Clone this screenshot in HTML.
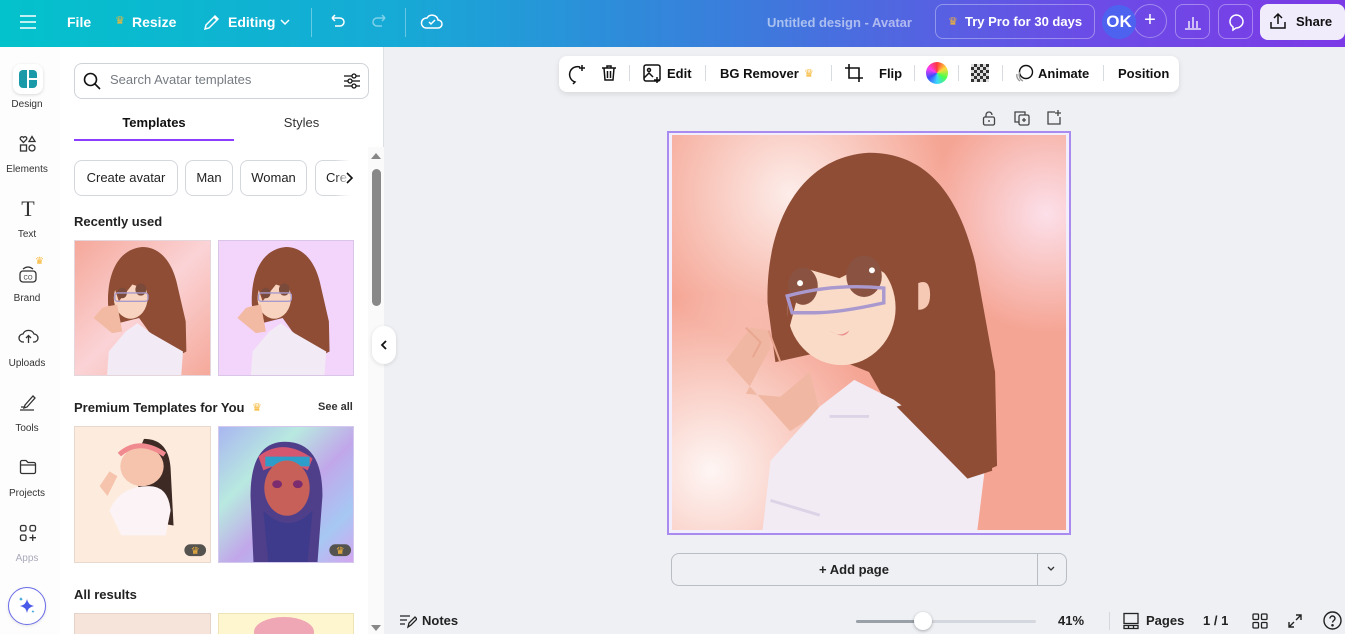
<!DOCTYPE html>
<html style="width:1345px;height:634px;overflow:hidden"><head><meta charset="utf-8">
<style>
*{box-sizing:border-box;margin:0;padding:0}
body{width:1345px;height:634px;overflow:hidden;font-family:"Liberation Sans",sans-serif;background:#eef0f4;position:relative;color:#0d1216}
.a{position:absolute}
.top{left:0;top:0;width:1345px;height:47px;background:linear-gradient(90deg,#03c2cc 0%,#17a9d6 30%,#3b7cdc 55%,#6a4de6 80%,#7c3ae6 100%)}
.tw{color:#fff;font-weight:bold;font-size:14px}
.rail{left:0;top:47px;width:60px;height:587px;background:#fdfdfd}
.ri{width:60px;text-align:center;font-size:10px;color:#333}
.panel{left:60px;top:47px;width:324px;height:587px;background:#fff;border-right:1px solid #dde0e5}
.chip{top:160px;height:36px;border:1px solid #d4d7dc;border-radius:8px;font-size:13px;color:#222;line-height:34px;text-align:center;background:#fff}
.h{font-size:13px;font-weight:bold;color:#222}
.tb{font-size:13px;font-weight:bold;color:#111}
.sep{width:1px;height:16px;background:#d8dbe0;top:65px}
</style></head><body>
<div class="a top"></div>
<svg class="a" style="left:18px;top:13px" width="20" height="18" viewBox="0 0 20 18"><path d="M2 3h16M2 9h16M2 15h16" stroke="#fff" stroke-width="1.6"/></svg>
<div class="a tw" style="left:67px;top:14px">File</div>
<div class="a" style="left:115px;top:14px;color:#f7b733;font-size:11px">♛</div>
<div class="a tw" style="left:132px;top:14px">Resize</div>
<svg class="a" style="left:202px;top:12px" width="20" height="20" viewBox="0 0 20 20"><path d="M3 17l1-4 9-9 3 3-9 9z M12 5l3 3" fill="none" stroke="#fff" stroke-width="1.5"/></svg>
<div class="a tw" style="left:228px;top:14px">Editing</div>
<svg class="a" style="left:279px;top:17px" width="12" height="10" viewBox="0 0 12 10"><path d="M2 3l4 4 4-4" fill="none" stroke="#fff" stroke-width="1.5"/></svg>
<div class="a" style="left:311px;top:8px;width:1px;height:29px;background:rgba(255,255,255,.35)"></div>
<svg class="a" style="left:327px;top:12px" width="20" height="20" viewBox="0 0 20 20"><path d="M5 6h8a4 4 0 010 8H8M5 6l3-3M5 6l3 3" fill="none" stroke="#fff" stroke-width="1.5"/></svg>
<svg class="a" style="left:370px;top:12px" width="20" height="20" viewBox="0 0 20 20"><path d="M15 6H7a4 4 0 000 8h5M15 6l-3-3M15 6l-3 3" fill="none" stroke="rgba(255,255,255,.45)" stroke-width="1.5"/></svg>
<div class="a" style="left:405px;top:8px;width:1px;height:29px;background:rgba(255,255,255,.35)"></div>
<svg class="a" style="left:420px;top:10px" width="24" height="22" viewBox="0 0 24 22"><path d="M6 18h12a4 4 0 000-8 6 6 0 00-11-2 5 5 0 00-1 10z" fill="none" stroke="#fff" stroke-width="1.5"/><path d="M9 12l2 2 4-4" fill="none" stroke="#fff" stroke-width="1.5"/></svg>
<div class="a" style="left:767px;top:15px;font-size:13px;font-weight:bold;color:rgba(255,255,255,.55)">Untitled design - Avatar</div>
<div class="a" style="left:935px;top:4px;width:160px;height:35px;border:1px solid rgba(255,255,255,.35);border-radius:8px"></div>
<div class="a" style="left:948px;top:15px;color:#f7b733;font-size:11px">♛</div>
<div class="a tw" style="left:965px;top:14px;font-size:13px">Try Pro for 30 days</div>
<div class="a" style="left:1133px;top:4px;width:34px;height:34px;border:1px solid rgba(255,255,255,.35);border-radius:50%;color:#fff;font-size:20px;text-align:center;line-height:31px">+</div>
<div class="a" style="left:1102px;top:5px;width:34px;height:34px;background:#4d63f0;border-radius:50%;color:#fff;font-weight:bold;font-size:17px;text-align:center;line-height:34px">OK</div>
<div class="a" style="left:1175px;top:4px;width:35px;height:35px;border:1px solid rgba(255,255,255,.35);border-radius:8px"></div>
<svg class="a" style="left:1183px;top:12px" width="20" height="20" viewBox="0 0 20 20"><path d="M2 17h16M6 16V9M10 16V5M14 16V9" stroke="#fff" stroke-width="1.3"/></svg>
<div class="a" style="left:1218px;top:4px;width:35px;height:35px;border:1px solid rgba(255,255,255,.35);border-radius:8px"></div>
<svg class="a" style="left:1226px;top:12px" width="20" height="20" viewBox="0 0 20 20"><path d="M10 3a7 6.5 0 110 13l-3 2v-3a6.5 6.5 0 013-12z" fill="none" stroke="#fff" stroke-width="1.5"/></svg>
<div class="a" style="left:1260px;top:4px;width:85px;height:36px;background:#f1ecfc;border-radius:8px"></div>
<svg class="a" style="left:1268px;top:11px" width="20" height="20" viewBox="0 0 20 20"><path d="M10 13V3M6 7l4-4 4 4M3 11v6h14v-6" fill="none" stroke="#111" stroke-width="1.5"/></svg>
<div class="a" style="left:1296px;top:14px;font-size:13px;font-weight:bold;color:#111">Share</div>

<div class="a rail"></div>
<div class="a" style="left:13px;top:64px;width:30px;height:30px;background:#fff;border-radius:8px;box-shadow:0 1px 3px rgba(0,0,0,.15)"></div>
<div class="a" style="left:19px;top:70px;width:18px;height:18px;background:#1a9aa8;border-radius:4px"><div style="position:absolute;left:8px;top:0;width:2px;height:18px;background:#fff"></div><div style="position:absolute;left:10px;top:8px;width:8px;height:2px;background:#fff"></div></div>
<div class="a ri" style="left:-3px;top:99px">Design</div>
<svg class="a" style="left:19px;top:135px" width="18" height="18" viewBox="0 0 18 18" fill="none" stroke="#333" stroke-width="1.3"><path d="M4.5 7.5L1.5 4.5a1.6 1.6 0 013-2 1.6 1.6 0 013 2z"/><path d="M13 1.5l3 5h-6z"/><rect x="1.5" y="10" width="6" height="6"/><circle cx="13" cy="13" r="3"/></svg>
<div class="a ri" style="left:-3px;top:164px">Elements</div>
<div class="a ri" style="left:-2px;top:196px;font-family:'Liberation Serif',serif;font-size:22px;color:#333">T</div>
<div class="a ri" style="left:-3px;top:229px">Text</div>
<svg class="a" style="left:18px;top:264px" width="20" height="20" viewBox="0 0 20 20" fill="none" stroke="#333" stroke-width="1.3"><rect x="2" y="7" width="16" height="11" rx="3"/><path d="M5 5q5-4 10 0"/><text x="10" y="15.5" font-size="6" text-anchor="middle" fill="#333" stroke="none" font-family="Liberation Sans">CO</text></svg>
<div class="a" style="left:35px;top:256px;color:#f7b733;font-size:10px">♛</div>
<div class="a ri" style="left:-3px;top:293px">Brand</div>
<svg class="a" style="left:18px;top:327px" width="21" height="18" viewBox="0 0 21 18" fill="none" stroke="#333" stroke-width="1.3"><path d="M6 15H5a4 4 0 010-8 6 6 0 0111 0 4 4 0 010 8h-1"/><path d="M10.5 16V9M8 11l2.5-2.5L13 11"/></svg>
<div class="a ri" style="left:-3px;top:358px">Uploads</div>
<svg class="a" style="left:18px;top:392px" width="20" height="20" viewBox="0 0 20 20" fill="none" stroke="#333" stroke-width="1.3"><path d="M7 13l8-9 2 2-8 9-3 1z M2 18h14M3 15h3"/></svg>
<div class="a ri" style="left:-3px;top:423px">Tools</div>
<svg class="a" style="left:19px;top:459px" width="18" height="16" viewBox="0 0 18 16" fill="none" stroke="#333" stroke-width="1.3"><path d="M1.5 3a1.5 1.5 0 011.5-1.5h4l2 2h6a1.5 1.5 0 011.5 1.5v8a1.5 1.5 0 01-1.5 1.5H3A1.5 1.5 0 011.5 13z M1.5 6h15"/></svg>
<div class="a ri" style="left:-3px;top:488px">Projects</div>
<svg class="a" style="left:19px;top:524px" width="18" height="18" viewBox="0 0 18 18" fill="none" stroke="#333" stroke-width="1.3"><rect x="1.5" y="1.5" width="5.5" height="5.5" rx="1.5"/><rect x="11" y="1.5" width="5.5" height="5.5" rx="1.5"/><rect x="1.5" y="11" width="5.5" height="5.5" rx="1.5"/><path d="M13.7 10.5v6.5M10.5 13.7h6.5"/></svg>
<div class="a ri" style="left:-3px;top:553px;color:#aab">Apps</div>
<div class="a" style="left:8px;top:587px;width:38px;height:38px;border-radius:50%;background:#fff;border:1.5px solid #6a6ce8;box-shadow:0 1px 3px rgba(0,0,0,.1)"></div>
<svg class="a" style="left:16px;top:595px" width="22" height="22" viewBox="0 0 22 22"><path d="M11 4q1 6 7 7q-6 1-7 7q-1-6-7-7q6-1 7-7z" fill="#4a5ae8"/><path d="M5 2q.4 2 2 2q-1.6.4-2 2q-.4-1.6-2-2q1.6-.4 2-2z" fill="#2e9fd6"/><path d="M17 15q.3 1.5 1.5 1.5q-1.2.3-1.5 1.5q-.3-1.2-1.5-1.5q1.2-.3 1.5-1.5z" fill="#2e9fd6"/></svg>

<div class="a panel"></div>
<div class="a" style="left:74px;top:63px;width:295px;height:36px;border:1px solid #cfd3d8;border-radius:8px"></div>
<svg class="a" style="left:82px;top:71px" width="20" height="20" viewBox="0 0 20 20" fill="none" stroke="#111" stroke-width="1.6"><circle cx="8.5" cy="8.5" r="6"/><path d="M13 13l5 5"/></svg>
<div class="a" style="left:110px;top:72px;font-size:13px;color:#767b82">Search Avatar templates</div>
<svg class="a" style="left:342px;top:71px" width="20" height="20" viewBox="0 0 20 20" fill="none" stroke="#111" stroke-width="1.3"><path d="M2 5h16M2 10h16M2 15h16"/><circle cx="12" cy="5" r="2" fill="#fff"/><circle cx="8" cy="10" r="2" fill="#fff"/><circle cx="12" cy="15" r="2" fill="#fff"/></svg>
<div class="a" style="left:74px;top:115px;width:160px;text-align:center;font-size:13px;font-weight:bold;color:#111">Templates</div>
<div class="a" style="left:234px;top:115px;width:135px;text-align:center;font-size:13px;color:#333">Styles</div>
<div class="a" style="left:74px;top:139px;width:160px;height:2px;background:#8b3dff"></div>
<div class="a chip" style="left:74px;width:104px">Create avatar</div>
<div class="a chip" style="left:185px;width:48px">Man</div>
<div class="a chip" style="left:240px;width:67px">Woman</div>
<div class="a chip" style="left:315px;width:48px;text-align:left;padding-left:10px;border-right:none;border-radius:8px 0 0 8px">Cre</div>
<div class="a" style="left:335px;top:160px;width:30px;height:36px;background:linear-gradient(90deg,rgba(255,255,255,0),#fff 50%)"></div>
<svg class="a" style="left:344px;top:171px" width="12" height="14" viewBox="0 0 12 14"><path d="M3 2l5 5-5 5" fill="none" stroke="#111" stroke-width="1.6"/></svg>
<div class="a h" style="left:74px;top:214px">Recently used</div>

<svg class="a" style="left:74px;top:240px;border:1px solid #e5d6dc" width="137" height="136" viewBox="0 0 400 400" preserveAspectRatio="none">
<defs><linearGradient id="bg1" x1="0" y1="0" x2="1" y2="1"><stop offset="0" stop-color="#f5a89a"/><stop offset=".5" stop-color="#fbd3d6"/><stop offset="1" stop-color="#f5a99a"/></linearGradient></defs>
<rect width="400" height="400" fill="url(#bg1)"/><g id="girl"><path d="M200 18C120 25 95 110 98 190L110 250L190 230L240 300L300 345L330 330L328 240L305 140C290 60 250 18 200 18z" fill="#8f4d35"/><ellipse cx="165" cy="170" rx="50" ry="62" fill="#f8d4c0"/><path d="M110 120Q150 60 220 100L230 150L170 130L130 180z" fill="#8f4d35"/><path d="M55 230L80 200L95 195L125 190L140 270L110 275z" fill="#f2b9a3"/><path d="M95 400L100 330L150 270L185 245L225 275L320 330L315 400z" fill="#f2eaf4"/><ellipse cx="140" cy="155" rx="14" ry="16" fill="#7a4a3a"/><ellipse cx="195" cy="145" rx="16" ry="18" fill="#7a4a3a"/><rect x="118" y="155" width="98" height="25" rx="8" fill="none" stroke="#a99acc" stroke-width="4"/></g></svg>
<svg class="a" style="left:218px;top:240px;border:1px solid #d9c6e6" width="136" height="136" viewBox="0 0 400 400" preserveAspectRatio="none"><rect width="400" height="400" fill="#f3d4fb"/><use href="#girl"/></svg>

<div class="a h" style="left:74px;top:400px">Premium Templates for You</div>
<div class="a" style="left:252px;top:401px;color:#f7b733;font-size:11px">♛</div>
<div class="a" style="left:318px;top:401px;font-size:11px;font-weight:bold;color:#333">See all</div>
<svg class="a" style="left:74px;top:426px;border:1px solid #e8d9cf" width="137" height="137" viewBox="0 0 137 137"><rect width="137" height="137" fill="#fdecde"/><path d="M70 12q25 0 27 30l3 58-30-5-10-60z" fill="#3d2a24"/><ellipse cx="68" cy="40" rx="22" ry="20" fill="#f6c3ad"/><path d="M45 28q20-18 46 0" stroke="#f08a8f" stroke-width="5" fill="none"/><path d="M35 85q10-25 40-25q20 0 22 25l-5 25h-45z" fill="#fbf3f6"/><path d="M25 60l10-15 8 5-10 20z" fill="#f6c3ad"/><rect x="111" y="119" width="22" height="12" rx="6" fill="#55534f"/><text x="122" y="129" font-size="10" fill="#f5b53c" text-anchor="middle">♛</text></svg>
<svg class="a" style="left:218px;top:426px;border:1px solid #d4c8ee" width="136" height="137" viewBox="0 0 136 137"><defs><linearGradient id="bg2" x1="0" y1="0" x2="1" y2="1"><stop offset="0" stop-color="#a9b6f0"/><stop offset=".3" stop-color="#b8e9e0"/><stop offset=".55" stop-color="#c1a7ea"/><stop offset=".8" stop-color="#a6c8f3"/><stop offset="1" stop-color="#d3a6ef"/></linearGradient></defs><rect width="136" height="137" fill="url(#bg2)"/><path d="M35 137L32 70q0-55 35-55q38 0 38 55l-5 67z" fill="#4f3f8a"/><path d="M40 30q25-20 55 2l-5 12q-20-12-45 0z" fill="#d4566f"/><path d="M47 30h45v10h-45z" fill="#2d9ec9"/><ellipse cx="69" cy="62" rx="23" ry="28" fill="#c8605a"/><ellipse cx="59" cy="58" rx="5" ry="4" fill="#7b2c6e"/><ellipse cx="80" cy="58" rx="5" ry="4" fill="#7b2c6e"/><path d="M45 85q25 25 50 0l-5 52h-40z" fill="#3f3b8c"/><rect x="112" y="119" width="22" height="12" rx="6" fill="#55534f"/><text x="123" y="129" font-size="10" fill="#f5b53c" text-anchor="middle">♛</text></svg>
<div class="a h" style="left:74px;top:587px">All results</div>
<div class="a" style="left:74px;top:613px;width:137px;height:21px;background:#f6e3da;border:1px solid #e5d3c9;border-bottom:none"></div>
<div class="a" style="left:218px;top:613px;width:136px;height:21px;background:#fdf6cf;border:1px solid #eee3b5;border-bottom:none;overflow:hidden"><div style="position:absolute;left:35px;top:3px;width:60px;height:30px;border-radius:50%;background:#efa6b5"></div></div>

<div class="a" style="left:368px;top:147px;width:16px;height:487px;background:#fafafa"></div>
<svg class="a" style="left:371px;top:152px" width="10" height="8" viewBox="0 0 10 8"><path d="M0 7L5 1L10 7z" fill="#888"/></svg>
<div class="a" style="left:372px;top:169px;width:9px;height:137px;background:#888;border-radius:5px"></div>
<svg class="a" style="left:371px;top:624px" width="10" height="8" viewBox="0 0 10 8"><path d="M0 1L5 7L10 1z" fill="#888"/></svg>
<div class="a" style="left:372px;top:326px;width:24px;height:38px;background:#fff;border-radius:12px;box-shadow:0 1px 4px rgba(0,0,0,.12)"></div>
<svg class="a" style="left:379px;top:339px" width="10" height="12" viewBox="0 0 10 12"><path d="M7 2L3 6l4 4" fill="none" stroke="#111" stroke-width="1.8"/></svg>

<div class="a" style="left:559px;top:56px;width:620px;height:36px;background:#fff;border-radius:8px;box-shadow:0 2px 6px rgba(0,0,0,.1)"></div>
<svg class="a" style="left:566px;top:63px" width="22" height="22" viewBox="0 0 22 22" fill="none" stroke="#111" stroke-width="1.5"><path d="M14 4a7 7 0 10-5 15l-2 2M16 2v6M13 5h6"/></svg>
<svg class="a" style="left:599px;top:63px" width="20" height="20" viewBox="0 0 20 20" fill="none" stroke="#111" stroke-width="1.5"><path d="M3 5h14M8 5V3h4v2M5 5l1 12h8l1-12M8.5 8v7M11.5 8v7"/></svg>
<div class="a sep" style="left:629px"></div>
<svg class="a" style="left:642px;top:63px" width="20" height="20" viewBox="0 0 20 20" fill="none" stroke="#111" stroke-width="1.5"><rect x="2" y="2" width="16" height="16" rx="2"/><circle cx="7" cy="7" r="1.5"/><path d="M2 15l5-5 4 4M12 17h6M15 14v6"/></svg>
<div class="a tb" style="left:667px;top:66px">Edit</div>
<div class="a sep" style="left:705px"></div>
<div class="a tb" style="left:720px;top:66px">BG Remover</div>
<div class="a" style="left:804px;top:67px;color:#f7b733;font-size:11px">♛</div>
<div class="a sep" style="left:831px"></div>
<svg class="a" style="left:844px;top:63px" width="20" height="20" viewBox="0 0 20 20" fill="none" stroke="#111" stroke-width="1.6"><path d="M5 1v14h14M1 5h14v14"/></svg>
<div class="a tb" style="left:879px;top:66px">Flip</div>
<div class="a sep" style="left:914px"></div>
<div class="a" style="left:926px;top:62px;width:22px;height:22px;border-radius:50%;background:conic-gradient(#ff3b3b,#ffd93b,#4bff4b,#3bd7ff,#3b4bff,#ff3bf0,#ff3b3b)"></div>
<div class="a sep" style="left:958px"></div>
<div class="a" style="left:971px;top:64px;width:18px;height:18px;background:conic-gradient(#333 25%,#ddd 0 50%,#333 0 75%,#ddd 0);background-size:6px 6px"></div>
<div class="a sep" style="left:1002px"></div>
<svg class="a" style="left:1014px;top:63px" width="22" height="20" viewBox="0 0 22 20" fill="none" stroke="#111" stroke-width="1.4"><circle cx="12" cy="9" r="6.5"/><path d="M6 9a6.5 6.5 0 003 9M3 11a6.5 6.5 0 003 7" stroke="#999"/></svg>
<div class="a tb" style="left:1038px;top:66px">Animate</div>
<div class="a sep" style="left:1103px"></div>
<div class="a tb" style="left:1118px;top:66px">Position</div>

<svg class="a" style="left:981px;top:110px" width="16" height="16" viewBox="0 0 16 16" fill="none" stroke="#444" stroke-width="1.3"><rect x="2.5" y="7" width="11" height="8" rx="1.5"/><path d="M5 7V5a3 3 0 016 0"/><path d="M8 10v2"/></svg>
<svg class="a" style="left:1014px;top:110px" width="16" height="16" viewBox="0 0 16 16" fill="none" stroke="#444" stroke-width="1.3"><rect x="5" y="5" width="10" height="10" rx="1.5"/><path d="M11 5V2H1v10h4M10 8v4M8 10h4"/></svg>
<svg class="a" style="left:1046px;top:110px" width="16" height="16" viewBox="0 0 16 16" fill="none" stroke="#444" stroke-width="1.3"><path d="M9 2H2v12h12V7M12 0v6M9 3h6"/></svg>

<div class="a" style="left:667px;top:131px;width:404px;height:404px;border:2px solid #a98bf0;background:#f3eefc"></div>
<svg class="a" style="left:672px;top:135px" width="394" height="395" viewBox="0 0 400 400" preserveAspectRatio="none">
<defs><radialGradient id="w1" cx=".3" cy=".15" r=".4"><stop offset="0" stop-color="#fff" stop-opacity=".8"/><stop offset="1" stop-color="#fff" stop-opacity="0"/></radialGradient><radialGradient id="w2" cx=".1" cy=".85" r=".45"><stop offset="0" stop-color="#fff" stop-opacity=".9"/><stop offset="1" stop-color="#fff" stop-opacity="0"/></radialGradient><radialGradient id="w3" cx=".95" cy=".2" r=".3"><stop offset="0" stop-color="#fde6f3" stop-opacity=".9"/><stop offset="1" stop-color="#fde6f3" stop-opacity="0"/></radialGradient></defs>
<rect width="400" height="400" fill="#f5a594"/><rect width="400" height="400" fill="url(#w1)"/><rect width="400" height="400" fill="url(#w2)"/><rect width="400" height="400" fill="url(#w3)"/>
<path d="M200 18C130 22 95 90 97 170L105 230L150 220L200 240L240 310L300 348L330 335L328 240L308 130C290 55 255 18 200 18z" fill="#8f4d35"/>
<ellipse cx="172" cy="175" rx="55" ry="58" fill="#fadbc8"/>
<path d="M115 105Q160 40 235 95L248 160L200 130L170 145L135 135L118 200z" fill="#8f4d35"/>
<path d="M250 150q12-5 12 12q0 15-12 15z" fill="#f6c9b4"/>
<ellipse cx="133" cy="153" rx="15" ry="19" fill="#8a5240"/><ellipse cx="195" cy="143" rx="18" ry="21" fill="#8a5240"/>
<circle cx="130" cy="150" r="3" fill="#fff"/><circle cx="203" cy="137" r="3" fill="#fff"/>
<path d="M117 163Q165 150 215 155L215 170Q170 180 145 180L122 180z" fill="none" stroke="#a999cf" stroke-width="3.5"/>
<path d="M160 198q10 8 20 0q-5 10-20 0z" fill="#e88a8a"/>
<path d="M55 228L80 195L98 198L100 215L75 262L110 265L140 240L150 280L120 300z" fill="#f0b8a2"/>
<path d="M75 195L90 210L82 225M98 198L110 230" stroke="#e9a690" fill="none" stroke-width="2"/>
<path d="M92 400L100 330L150 275L185 248L225 268L270 300L318 335L310 400z" fill="#f2ebf4"/>
<path d="M100 370L150 385M160 285L200 285" stroke="#ddd3e6" stroke-width="3" fill="none"/>
<path d="M228 275L300 348L325 340L322 250z" fill="#8f4d35"/>
</svg>

<div class="a" style="left:671px;top:553px;width:396px;height:33px;border:1px solid #b9bdc4;border-radius:8px"></div>
<div class="a" style="left:1037px;top:554px;width:1px;height:31px;background:#b9bdc4"></div>
<div class="a" style="left:671px;top:562px;width:366px;text-align:center;font-size:13px;font-weight:bold;color:#222">+ Add page</div>
<svg class="a" style="left:1046px;top:565px" width="10" height="8" viewBox="0 0 10 8"><path d="M2 2l3 3 3-3" fill="none" stroke="#333" stroke-width="1.3"/></svg>

<svg class="a" style="left:399px;top:613px" width="18" height="16" viewBox="0 0 18 16" fill="none" stroke="#222" stroke-width="1.3"><path d="M1 3h10M1 7h7M1 11h5M9 14l1-4 6-6 2 2-6 6z"/></svg>
<div class="a" style="left:422px;top:613px;font-size:13px;font-weight:bold;color:#222">Notes</div>
<div class="a" style="left:856px;top:620px;width:180px;height:3px;background:#d4d7dd;border-radius:2px"></div>
<div class="a" style="left:856px;top:620px;width:65px;height:3px;background:#9aa0a8;border-radius:2px"></div>
<div class="a" style="left:914px;top:612px;width:18px;height:18px;border-radius:50%;background:#fff;box-shadow:0 1px 3px rgba(0,0,0,.3)"></div>
<div class="a" style="left:1058px;top:613px;font-size:13px;font-weight:bold;color:#222">41%</div>
<div class="a" style="left:1109px;top:612px;width:1px;height:18px;background:#d4d7dd"></div>
<svg class="a" style="left:1122px;top:612px" width="18" height="18" viewBox="0 0 18 18" fill="none" stroke="#222" stroke-width="1.3"><rect x="2" y="1.5" width="14" height="10"/><path d="M2 13.5h14v3H2zM6.5 13.5v3M11.5 13.5v3"/></svg>
<div class="a" style="left:1146px;top:613px;font-size:13px;font-weight:bold;color:#222">Pages</div>
<div class="a" style="left:1203px;top:613px;font-size:13px;font-weight:bold;color:#222">1 / 1</div>
<svg class="a" style="left:1251px;top:612px" width="18" height="18" viewBox="0 0 18 18" fill="none" stroke="#222" stroke-width="1.3"><rect x="2" y="2" width="5.5" height="5.5" rx="1"/><rect x="10.5" y="2" width="5.5" height="5.5" rx="1"/><rect x="2" y="10.5" width="5.5" height="5.5" rx="1"/><rect x="10.5" y="10.5" width="5.5" height="5.5" rx="1"/></svg>
<svg class="a" style="left:1286px;top:612px" width="18" height="18" viewBox="0 0 18 18" fill="none" stroke="#222" stroke-width="1.4"><path d="M10 3h5v5M15 3l-5 5M8 15H3v-5M3 15l5-5"/></svg>
<svg class="a" style="left:1322px;top:610px" width="21" height="21" viewBox="0 0 21 21" fill="none" stroke="#222" stroke-width="1.4"><circle cx="10.5" cy="10.5" r="8.5"/><path d="M8 8.5a2.5 2.5 0 115 0c0 2-2.5 2-2.5 4"/><circle cx="10.5" cy="15.3" r=".6" fill="#222"/></svg>
</body></html>
